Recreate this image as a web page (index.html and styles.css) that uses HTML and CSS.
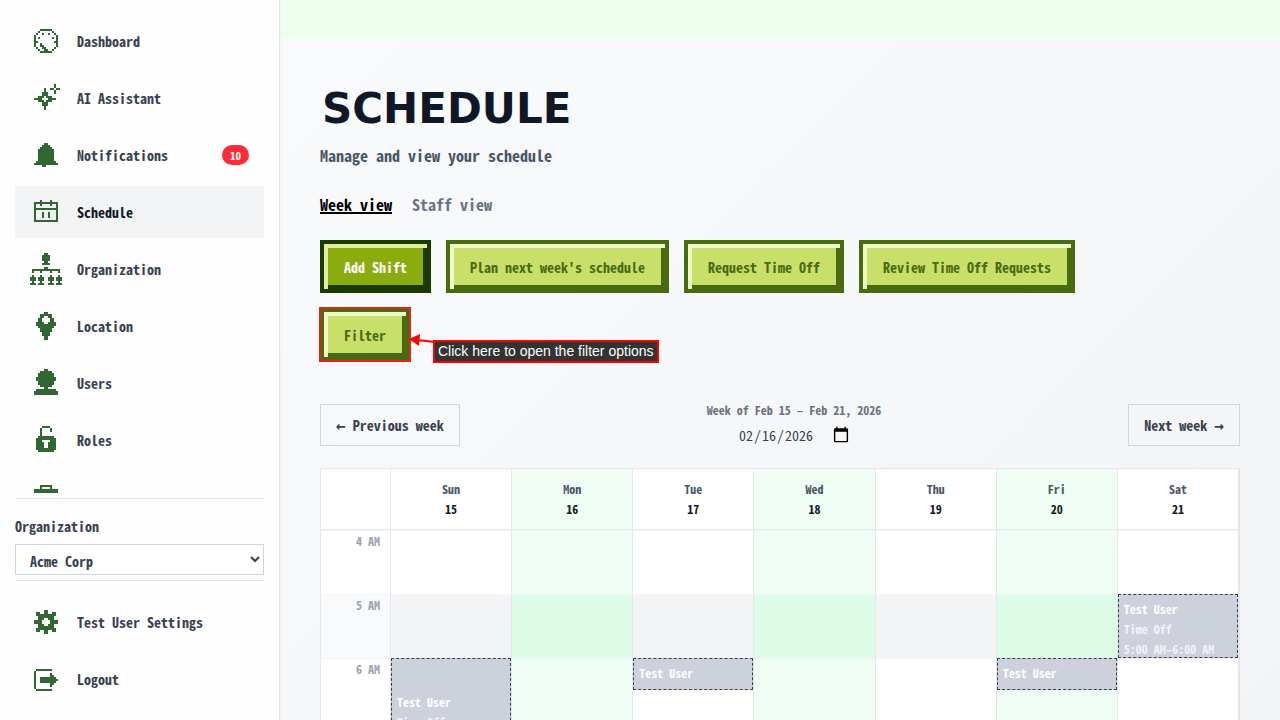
FILE: index.html
```html
<!DOCTYPE html>
<html lang="en">
<head>
<meta charset="utf-8">
<title>Schedule</title>
<link rel="stylesheet" href="styles.css">
</head>
<body>
<aside class="sidebar">
  <nav class="nav nav-main">
    <a class="item" href="#"><svg class="icon" viewBox="0 -.5 16 16"><path d="M5 2h6M4 3h1M11 3h1M3 4h1M12 4h1M6 4h1M9 4h1M2 5h1M13 5h1M2 6h1M13 6h1M4 6h1M11 6h1M2 7h1M13 7h1M2 8h2M12 8h2M2 9h1M13 9h1M5 9h1M2 10h1M13 10h1M5 10h2M3 11h1M12 11h1M6 11h2M4 12h1M11 12h1M7 12h2M5 13h6"/></svg><span>Dashboard</span></a>
    <a class="item" href="#"><svg class="icon" viewBox="0 -.5 16 16"><path d="M12 1h1M12 2h1M10 3h2M13 3h2M12 4h1M12 5h1M7 3h1M7 4h1M6 5h3M6 6h3M4 7h3M8 7h3M2 8h4M9 8h4M4 9h3M8 9h3M6 10h3M6 11h3M7 12h1M7 13h1"/></svg><span>AI Assistant</span></a>
    <a class="item" href="#"><svg class="icon" viewBox="0 -.5 16 16"><path d="M7 2h2M6 3h4M5 4h6M4 5h8M4 6h8M4 7h8M4 8h8M4 9h8M4 10h8M3 11h10M2 12h12M6 13h2"/></svg><span>Notifications</span><span class="badge">10</span></a>
    <a class="item active" href="#" aria-current="page"><svg class="icon" viewBox="0 -.5 16 16"><path d="M5 2h1M10 2h1M2 3h12M2 4h1M5 4h1M10 4h1M13 4h1M2 5h1M13 5h1M2 6h12M2 7h1M13 7h1M2 8h1M6 8h1M9 8h1M13 8h1M2 9h1M6 9h1M9 9h1M13 9h1M2 10h1M6 10h1M9 10h1M13 10h1M2 11h1M13 11h1M2 12h12"/></svg><span>Schedule</span></a>
    <a class="item" href="#"><svg class="icon" viewBox="0 -.5 16 16"><path d="M7 0h2M6 1h4M6 2h4M6 3h4M7 4h2M6 5h4M7 7h2M1 8h14M1 9h1M5 9h1M10 9h1M14 9h1M1 11h1M5 11h1M10 11h1M14 11h1M0 12h3M4 12h3M9 12h3M13 12h3M0 13h3M4 13h3M9 13h3M13 13h3M1 14h1M5 14h1M10 14h1M14 14h1M0 15h3M4 15h3M9 15h3M13 15h3"/></svg><span>Organization</span></a>
    <a class="item" href="#"><svg class="icon" viewBox="0 -.5 16 16"><path d="M7 1h2M5 2h6M5 3h2M9 3h2M4 4h2M10 4h2M4 5h2M10 5h2M3 6h4M9 6h4M3 7h10M4 8h8M5 9h6M5 10h6M6 11h4M6 12h4M7 13h2M7 14h2"/></svg><span>Location</span></a>
    <a class="item" href="#"><svg class="icon" viewBox="0 -.5 16 16"><path d="M7 1h2M5 2h6M4 3h8M4 4h8M3 5h10M3 6h10M4 7h8M4 8h8M5 9h6M7 10h2M3 11h10M2 12h12M2 13h12"/></svg><span>Users</span></a>
    <a class="item" href="#"><svg class="icon" viewBox="0 -.5 16 16"><path d="M6 1h4M5 2h1M10 2h1M5 3h1M10 3h1M5 4h1M5 5h1M4 6h8M3 7h10M3 8h3M10 8h3M3 9h4M9 9h4M3 10h4M9 10h4M3 11h4M9 11h4M3 12h10M4 13h8"/></svg><span>Roles</span></a>
    <a class="item" href="#" aria-label="Work"><svg class="icon" viewBox="0 -.5 16 16"><path d="M5 2h6M5 3h1M10 3h1M2 4h12M2 5h12M2 6h12M2 7h12M2 9h12M2 10h12M2 11h12M2 12h12"/></svg></a>
  </nav>
  <div class="org">
    <label for="org">Organization</label>
    <select id="org" class="select"><option>Acme Corp</option></select>
  </div>
  <nav class="nav nav-foot">
    <a class="item" href="#"><svg class="icon" viewBox="0 -.5 16 16"><path d="M7 2h2M3 3h2M7 3h2M11 3h2M3 4h10M4 5h8M4 6h3M9 6h3M2 7h4M10 7h4M2 8h4M10 8h4M4 9h3M9 9h3M4 10h8M3 11h10M3 12h2M7 12h2M11 12h2M7 13h2"/></svg><span>Test User Settings</span></a>
    <a class="item" href="#"><svg class="icon" viewBox="0 -.5 16 16"><path d="M3 3h8M2 4h1M2 5h1M10 5h1M2 6h1M10 6h2M2 7h1M5 7h8M2 8h1M5 8h9M2 9h1M5 9h8M2 10h1M10 10h2M2 11h1M10 11h1M2 12h1M3 13h8"/></svg><span>Logout</span></a>
  </nav>
</aside>
<main class="main">
  <div class="topbar"></div>
  <div class="content">
    <h1 class="title">SCHEDULE</h1>
    <p class="subtitle">Manage and view your schedule</p>
    <div class="tabs">
      <a class="tab selected" href="#">Week view</a>
      <a class="tab" href="#">Staff view</a>
    </div>
    <div class="actions">
      <button class="btn primary">Add Shift</button>
      <button class="btn">Plan next week's schedule</button>
      <button class="btn">Request Time Off</button>
      <button class="btn">Review Time Off Requests</button>
      <div class="hint-anchor">
        <button class="btn highlighted">Filter</button>
        <svg class="hint-arrow" viewBox="0 0 26 16"><path class="shaft" d="M8 6L26 8"/><path class="head" d="M0 5L11 0L10 12z"/></svg>
        <div class="hint" role="tooltip">Click here to open the filter options</div>
      </div>
    </div>
    <div class="weekbar">
      <button class="week-btn"><span class="arrow">←</span> Previous week</button>
      <div class="week-mid">
        <label class="week-label" for="date">Week of Feb 15 – Feb 21, 2026</label>
        <input class="date" id="date" type="date" value="2026-02-16">
      </div>
      <button class="week-btn">Next week <span class="arrow">→</span></button>
    </div>
    <table class="calendar">
      <thead>
        <tr><th class="hour"></th><th>Sun<b>15</b></th><th class="alt">Mon<b>16</b></th><th>Tue<b>17</b></th><th class="alt">Wed<b>18</b></th><th>Thu<b>19</b></th><th class="alt">Fri<b>20</b></th><th>Sat<b>21</b></th></tr>
      </thead>
      <tbody>
        <tr><th class="hour" scope="row">4 AM</th><td></td><td class="alt"></td><td></td><td class="alt"></td><td></td><td class="alt"></td><td></td></tr>
        <tr class="shaded"><th class="hour" scope="row">5 AM</th><td></td><td class="alt"></td><td></td><td class="alt"></td><td></td><td class="alt"></td>
          <td><div class="event one-hour"><b>Test User</b><span>Time Off</span><span>5:00 AM–6:00 AM</span></div></td></tr>
        <tr><th class="hour" scope="row">6 AM</th>
          <td><div class="event long"><b>Test User</b><span>Time Off</span></div></td>
          <td class="alt"></td>
          <td><div class="event half-hour"><b>Test User</b></div></td>
          <td class="alt"></td><td></td>
          <td class="alt"><div class="event half-hour"><b>Test User</b></div></td>
          <td></td></tr>
      </tbody>
    </table>
  </div>
</main>
</body>
</html>
```
FILE: styles.css
```css
* { box-sizing: border-box; }
body {
  display: flex;
  height: 100vh;
  margin: 0;
  overflow: hidden;
  color: #374151;
  font: bold 14px/20px "Noto Sans Mono CJK SC", "Liberation Mono", monospace;
}
button, select, input { font: inherit; color: inherit; }
a { color: inherit; text-decoration: none; }

.sidebar {
  display: flex;
  flex-direction: column;
  flex: 0 0 280px;
  padding: 15px;
  background: #fefefe;
  border-right: 1px solid #e5e7eb;
  box-shadow: 1px 0 2px #f0f1f3;
  z-index: 1;
}
.nav { display: flex; flex-direction: column; gap: 5px; }
.nav-main { flex: 1; min-height: 0; overflow: hidden; }
.item {
  display: flex;
  flex: none;
  align-items: center;
  gap: 15px;
  height: 52px;
  padding: 0 15px;
}
.active { background: #f3f4f6; color: #111827; }
.icon { width: 32px; height: 32px; flex: none; }
.icon path { stroke: #326632; stroke-width: 1; fill: none; shape-rendering: crispEdges; }
.item .badge {
  margin-left: auto;
  padding: 0 8px;
  border-radius: 10px;
  background: #fb2c36;
  color: #fff;
  font-size: 11px;
}
.org {
  display: flex;
  flex-direction: column;
  gap: 8px;
  margin-top: 5px;
  padding: 17px 0 5px;
  border: solid #e5e7eb;
  border-width: 1px 0;
}
.select {
  width: 100%;
  height: 31px;
  padding: 2px 10px 0;
  background: #fff;
  border: 1px solid #d1d5dc;
  border-radius: 0;
}
.nav-foot { padding-top: 15px; }

.main {
  flex: 1;
  min-width: 0;
  overflow: hidden;
  background: linear-gradient(135deg, #f9fafc, #f3f4f6);
}
.topbar { height: 40px; background: #edffed; }
.content { padding: 40px; }
.title {
  margin: 0;
  padding-left: 2px;
  color: #101828;
  font: bold 42px/58px "DejaVu Sans", sans-serif;
}
.subtitle { margin: 5px 0 25px; font-size: 16px; line-height: 24px; color: #4a5565; }
.tabs { display: flex; gap: 20px; margin-bottom: 24px; font-size: 16px; line-height: 24px; color: #6a7282; }
.selected { color: #000; text-decoration: underline; text-decoration-thickness: 2px; }

.actions { display: flex; flex-wrap: wrap; gap: 15px; max-width: 820px; }
.btn {
  height: 53px;
  padding: 0 20px;
  border: 4px solid #496b10;
  border-radius: 0;
  background: #c8df6a;
  box-shadow: inset 4px 4px #eff8c8, inset -4px -4px #496b10;
  color: #496b10;
}
.primary {
  border-color: #1a3a00;
  background: #8bac0f;
  box-shadow: inset 4px 4px #e0ee9b, inset -4px -4px #1a3a00;
  color: #fff;
}
.hint-anchor { position: relative; display: flex; }
.highlighted { outline: 2px solid #e8201a; outline-offset: -1px; }
.hint-arrow { position: absolute; left: 89px; top: 26px; width: 26px; height: 16px; }
.shaft { stroke: #f00; stroke-width: 2; }
.head { fill: #f00; }
.hint {
  position: absolute;
  left: 113px;
  top: 32px;
  padding: 0 3px;
  border: 2px solid #f00;
  background: #333;
  color: #fff;
  font: 14px/19px "Liberation Sans", sans-serif;
  white-space: nowrap;
}

.weekbar {
  display: flex;
  justify-content: space-between;
  align-items: center;
  margin: 39px 0 18px;
}
.week-btn {
  height: 42px;
  padding: 0 15px;
  background: transparent;
  border: 1px solid #d1d5dc;
}
.arrow { font: bold 16px/20px "DejaVu Sans Mono", monospace; }
.week-mid { display: flex; flex-direction: column; align-items: center; }
.week-label { font-size: 12px; color: #6a7282; }
.date { height: 30px; padding: 0; border: 0; background: transparent; font-size: 14px; font-weight: 500; }
.date::-webkit-calendar-picker-indicator { width: 18px; height: 18px; margin-left: 4px; padding: 0; }

.calendar {
  width: 100%;
  table-layout: fixed;
  border-collapse: separate;
  border-spacing: 0;
  border: 1px solid #e5e7eb;
  border-right-width: 2px;
  background: #fff;
  font-size: 12px;
}
.calendar th, .calendar td { padding: 0; }
.calendar td, .calendar thead th { border-left: 1px solid #e5e7eb; }
.calendar thead th {
  height: 61px;
  border-bottom: 1px solid #e5e7eb;
  color: #4a5565;
}
.calendar thead b { display: block; color: #101828; }
.calendar tbody th, .calendar td { height: 64px; border-top: 1px solid #f3f4f6; vertical-align: top; }
.calendar .hour { width: 69px; border-left: 0; }
.calendar tbody .hour { padding: 0 10px 0 0; text-align: right; color: #99a1af; }
.calendar .alt { background: #f0fdf4; }
.shaded td { background: #f3f4f6; }
.shaded .hour { background: #f9fafb; }
.calendar .shaded .alt { background: #dcfce7; }
.calendar td { position: relative; }
.event {
  position: absolute;
  inset: -1px 0 auto;
  padding: 4px 5px;
  overflow: hidden;
  border: 1px dashed #374151;
  background: #cdd1db;
  color: #f3f4f6;
  white-space: nowrap;
}
.event b, .event span { display: block; }
.event b { color: #fff; }
.one-hour { height: 64px; }
.half-hour { height: 32px; }
.long { height: 192px; padding-top: 33px; }
```
